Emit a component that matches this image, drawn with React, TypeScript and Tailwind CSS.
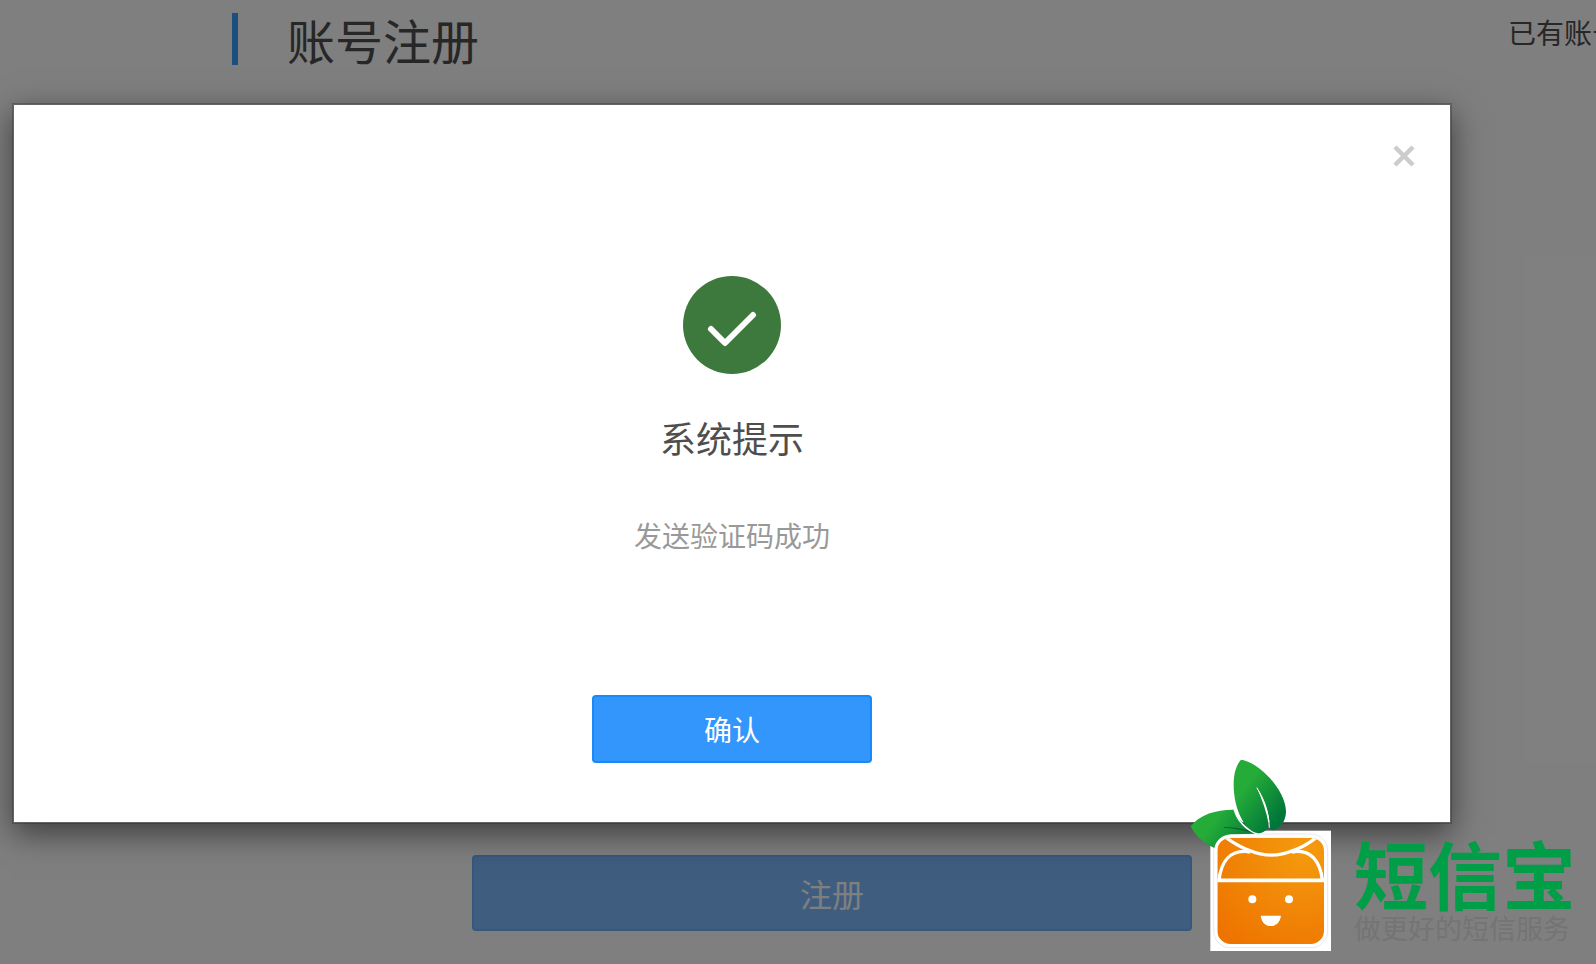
import { useState } from 'react';

const BrandMark = () => (
  <svg viewBox="30 24 426 582" className="w-[142px] h-[194px] shrink-0" aria-hidden="true">
    <defs>
      <linearGradient id="leaf" x1="0.2" y1="0.2" x2="0.8" y2="0.85">
        <stop offset="0.15" stopColor="#25ac38" />
        <stop offset="1" stopColor="#00773a" />
      </linearGradient>
      <linearGradient id="leafSmall" x1="0" y1="0.3" x2="1" y2="0.7">
        <stop offset="0.3" stopColor="#25ac38" />
        <stop offset="1" stopColor="#007a3a" />
      </linearGradient>
      <radialGradient id="orange" cx="0.82" cy="0.12" r="1.1">
        <stop offset="0" stopColor="#f49b0e" />
        <stop offset="1" stopColor="#ee7300" />
      </radialGradient>
      <clipPath id="box">
        <rect x="112" y="263" width="320" height="319" rx="40" />
      </clipPath>
    </defs>

    {/* Box */}
    <rect x="91" y="242" width="362" height="361" fill="#fff" />
    <rect x="101" y="252" width="342" height="341" rx="50" fill="#fff" stroke="#e9e9e9" strokeWidth="3" />

    {/* Leaves */}
    <path d="M32 229 C60 192 112 178 163 179 C170 202 188 222 229 251 L152 253 C124 256 108 272 103 294 C80 284 48 262 32 229 Z" fill="url(#leafSmall)" />
    <path d="M132 231 C165 232 200 238 230 251 C200 243 160 233 132 233 Z" fill="#075c2b" />
    <path d="M163 179 C171 205 190 234 229 251" fill="none" stroke="#fff" strokeWidth="5" />
    <path d="M183 29 C232 34 316 116 318 184 C318 214 300 238 278 241 C270 238 268 232 269 222 C267 190 254 150 231 114 C247 150 260 186 266 222 C264 242 246 252 232 249 C196 242 161 180 161 104 C161 68 170 44 183 29 Z" fill="url(#leaf)" />
    <path d="M231 114 C254 150 266 186 268 232" fill="none" stroke="#fff" strokeWidth="3" strokeLinecap="round" />

    <rect x="107" y="258" width="330" height="329" rx="46" fill="#fff" />
    <g clipPath="url(#box)">
      <rect x="112" y="263" width="320" height="319" fill="url(#orange)" />
      <g fill="none" stroke="#fff" strokeWidth="10">
        <path d="M108 391 H436" strokeWidth="11" />
        <path d="M134 260 Q172 288 207 301 Q274 330 341 301 Q378 288 412 260" />
        <path d="M117 390 C124 330 154 302 197 304 L211 306" />
        <path d="M427 390 C420 330 390 302 350 304 L335 306" />
      </g>
    </g>
    <circle cx="217" cy="448" r="12" fill="#fff" />
    <circle cx="327" cy="448" r="12" fill="#fff" />
    <path d="M242 497 H303 C300 517 288 528 272 528 C256 528 245 517 242 497 Z" fill="#fff" />
  </svg>
);

const SuccessIcon = () => (
  <svg viewBox="0 0 98 98" className="size-[98px]" aria-hidden="true">
    <circle cx="49" cy="49" r="49" fill="#3d783d" />
    <path d="M28 53 L42 67 L70 39" fill="none" stroke="#fff" strokeWidth="6" strokeLinecap="round" strokeLinejoin="round" />
  </svg>
);

export default function App() {
  const [open, setOpen] = useState(true);

  return (
    <div className="relative flex h-screen flex-col overflow-hidden bg-white font-['Noto_Sans_CJK_SC',sans-serif] text-[#4e4e4e]">
      <header className="flex items-start justify-between pt-3 pl-[232px]">
        <div className="flex items-center">
          <span className="h-[52px] w-1.5 bg-[#379eff]" />
          <h1 className="ml-[49px] text-[48px] leading-[54px]">账号注册</h1>
        </div>
        <p className="w-[88px] overflow-hidden text-[28px] leading-10 whitespace-nowrap">已有账号</p>
      </header>

      <form className="mt-auto mr-[404px] mb-[33px] ml-[472px]" onSubmit={(e) => e.preventDefault()}>
        <button
          type="submit"
          className="h-[76px] w-full rounded border-2 border-[#6cb0fc] bg-[#7cbafe] text-[32px] text-white"
        >
          注册
        </button>
      </form>

      {open && (
        <div className="absolute inset-0 bg-black/50">
          <div
            role="dialog"
            aria-labelledby="dialog-title"
            className="relative mt-[103px] mr-36 ml-3 flex flex-col items-center border-2 border-black/20 bg-white bg-clip-padding pt-[171px] pb-[59px] shadow-[0_10px_30px_rgba(0,0,0,0.5)]"
          >
            <button
              type="button"
              aria-label="关闭"
              onClick={() => setOpen(false)}
              className="absolute top-[39px] right-[34px] flex size-6 items-center justify-center"
            >
              <svg viewBox="0 0 24 24" className="size-6" aria-hidden="true">
                <path d="M3 3 L21 21 M21 3 L3 21" stroke="#ccc" strokeWidth="4.5" />
              </svg>
            </button>
            <SuccessIcon />
            <h2 id="dialog-title" className="mt-[37px] text-[36px] leading-[52px]">
              系统提示
            </h2>
            <p className="mt-[52px] text-[28px] leading-10 text-[#999]">发送验证码成功</p>
            <button
              type="button"
              onClick={() => setOpen(false)}
              className="mt-[140px] h-[68px] w-[280px] rounded border-2 border-[#1989fa] bg-[#3396fc] text-[28px] text-white"
            >
              确认
            </button>
          </div>
        </div>
      )}

      {/* Brand badge */}
      <div className="absolute right-5 bottom-3 flex items-end gap-[22px]">
        <BrandMark />
        <div className="flex flex-col pb-1.5">
          <span className="text-[74px] leading-[76px] font-bold text-[#009e47]">短信宝</span>
          <span className="text-[27px] leading-9 text-[#747474]">做更好的短信服务</span>
        </div>
      </div>
    </div>
  );
}
